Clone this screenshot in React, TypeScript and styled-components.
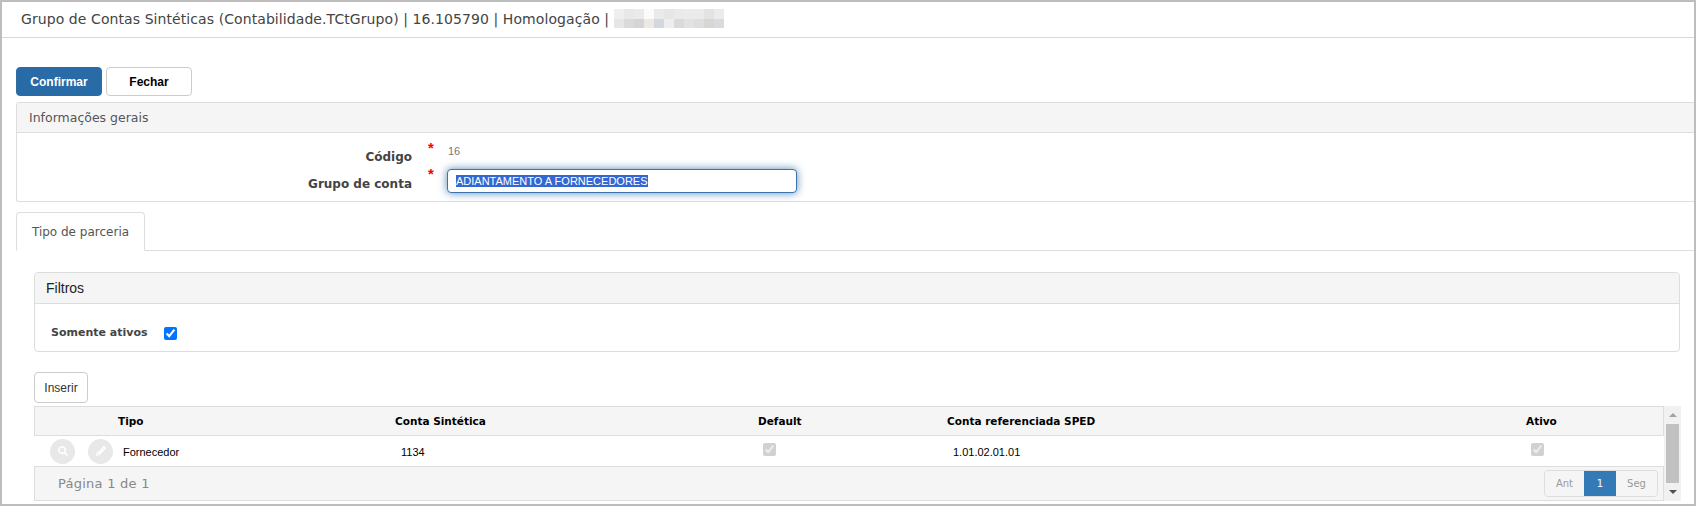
import { useEffect, useRef } from 'react'
import styled, { createGlobalStyle } from 'styled-components'
import { FaPencilAlt, FaSearch } from 'react-icons/fa'

const verdana = '"DejaVu Sans", Verdana, sans-serif'
const arial = '"Liberation Sans", Arial, sans-serif'

const blurRows = [
  ['#efefef', '#e8e8e8', '#ebebeb', '#fcfbf7', '#e8eaed', '#e6e6e6', '#e9eaea', '#ebebe9', '#ebebeb', '#e3e3e1', '#ebebeb'],
  ['#e6e6e6', '#d8dadc', '#d6d5d3', '#ece9e6', '#d3d8de', '#eeeeee', '#dadada', '#e2e2e2', '#dedede', '#d8d6d4', '#d9dadb'],
]

export default function App() {
  const inputRef = useRef<HTMLInputElement>(null)

  useEffect(() => {
    inputRef.current?.focus()
    inputRef.current?.select()
  }, [])

  return (
    <Frame>
      <GlobalStyle />
      <TitleBar>
        Grupo de Contas Sintéticas (Contabilidade.TCtGrupo) | 16.105790 | Homologação |
        <Blur>
          {blurRows.flat().map((color, i) => (
            <BlurCell key={i} $color={color} />
          ))}
        </Blur>
      </TitleBar>

      <Content>
        <Actions>
          <PrimaryButton>Confirmar</PrimaryButton>
          <DefaultButton>Fechar</DefaultButton>
        </Actions>

        <GeneralPanel>
          <GeneralHeading>Informações gerais</GeneralHeading>
          <FormGrid>
            <FieldLabel $drop={2}>Código</FieldLabel>
            <Star>*</Star>
            <StaticValue>16</StaticValue>
            <FieldLabel $drop={6}>Grupo de conta</FieldLabel>
            <Star>*</Star>
            <TextInput ref={inputRef} defaultValue="ADIANTAMENTO A FORNECEDORES" />
          </FormGrid>
        </GeneralPanel>

        <TabStrip>
          <Tab>Tipo de parceria</Tab>
        </TabStrip>

        <TabBody>
          <FilterPanel>
            <FilterHeading>Filtros</FilterHeading>
            <FilterBody>
              <FilterLabel>Somente ativos</FilterLabel>
              <Check type="checkbox" defaultChecked />
            </FilterBody>
          </FilterPanel>

          <InsertButton>Inserir</InsertButton>

          <GridWrap>
            <DataGrid>
              <HeaderRow>
                <HeaderCell />
                <HeaderCell />
                <HeaderCell>Tipo</HeaderCell>
                <HeaderCell>Conta Sintética</HeaderCell>
                <HeaderCell>Default</HeaderCell>
                <HeaderCell>Conta referenciada SPED</HeaderCell>
                <HeaderCell>Ativo</HeaderCell>
              </HeaderRow>
              <DataRow>
                <IconCell $inset={16}>
                  <RoundIcon><FaSearch /></RoundIcon>
                </IconCell>
                <IconCell $inset={15}>
                  <RoundIcon><FaPencilAlt /></RoundIcon>
                </IconCell>
                <TextCell $inset={12}>Fornecedor</TextCell>
                <TextCell $inset={13}>1134</TextCell>
                <CheckCell>
                  <Check type="checkbox" defaultChecked disabled />
                </CheckCell>
                <TextCell $inset={13}>1.01.02.01.01</TextCell>
                <CheckCell>
                  <Check type="checkbox" defaultChecked disabled />
                </CheckCell>
              </DataRow>
              <Footer>
                <PageInfo>Página 1 de 1</PageInfo>
                <Pager>
                  <PageItem $width={39}>Ant</PageItem>
                  <PageItem $width={32} $active>1</PageItem>
                  <PageItem $width={41}>Seg</PageItem>
                </Pager>
              </Footer>
            </DataGrid>
            <ScrollBar>
              <ArrowUp />
              <Thumb />
              <ArrowDown />
            </ScrollBar>
          </GridWrap>
        </TabBody>
      </Content>
    </Frame>
  )
}

const GlobalStyle = createGlobalStyle`
  * {
    box-sizing: border-box;
  }

  html, body {
    margin: 0;
    background: #fff;
  }

  ::selection {
    background: #3367d1;
    color: #fff;
  }
`

const Frame = styled.div`
  width: 1696px;
  height: 506px;
  overflow: hidden;
  border: 2px solid #bdbdbd;
  background: #fff;
`

const TitleBar = styled.div`
  display: flex;
  align-items: center;
  gap: 5px;
  height: 36px;
  padding: 0 0 2px 19px;
  border-bottom: 1px solid #d9d9d9;
  color: #444;
  font-family: ${verdana};
  font-size: 14px;
  letter-spacing: 0.08px;
  white-space: pre;
`

const Blur = styled.div`
  display: grid;
  grid-template-columns: repeat(11, 10px);
  grid-auto-rows: 9.5px;
`

const BlurCell = styled.div<{ $color: string }>`
  background: ${({ $color }) => $color};
`

const Content = styled.div`
  padding: 29px 0 0 14px;
`

const Actions = styled.div`
  display: flex;
  gap: 4px;
  margin-bottom: 6px;
`

const PrimaryButton = styled.button`
  width: 86px;
  height: 29px;
  padding: 0;
  border: 1px solid #2e6da4;
  border-radius: 4px;
  background: #286ba6;
  color: #fff;
  font-family: ${arial};
  font-size: 12px;
  font-weight: 700;
`

const DefaultButton = styled(PrimaryButton)`
  border-color: #ccc;
  background: #fff;
  color: #000;
`

const GeneralPanel = styled.section`
  border: 1px solid #ddd;
  border-right: 0;
  border-radius: 3px 0 0 3px;
`

const GeneralHeading = styled.div`
  display: flex;
  align-items: center;
  height: 30px;
  padding-left: 12px;
  border-bottom: 1px solid #ddd;
  background: #f5f5f5;
  color: #555;
  font-family: ${verdana};
  font-size: 12.5px;
`

const FormGrid = styled.div`
  display: grid;
  grid-template-columns: 395px 35px 1fr;
  grid-template-rows: 26px 24px;
  padding: 10px 0 8px;
  align-items: center;
`

const FieldLabel = styled.label<{ $drop: number }>`
  padding-top: ${({ $drop }) => $drop}px;
  color: #444;
  font-family: ${verdana};
  font-size: 12px;
  font-weight: 700;
  text-align: right;
`

const Star = styled.span`
  align-self: start;
  margin-top: -3px;
  padding-left: 16px;
  color: #f00;
  font-family: ${arial};
  font-size: 15px;
  font-weight: 700;
  line-height: 15px;
`

const StaticValue = styled.span`
  align-self: start;
  padding: 2px 0 0 1px;
  color: #777;
  font-family: ${arial};
  font-size: 11px;
`

const TextInput = styled.input`
  width: 350px;
  height: 24px;
  padding: 0 8px;
  border: 1px solid #3a76ad;
  border-radius: 4px;
  outline: 0;
  box-shadow: 0 0 8px rgba(46, 109, 164, 0.8);
  color: #444;
  font-family: ${arial};
  font-size: 11px;
`

const TabStrip = styled.div`
  display: flex;
  margin-top: 10px;
  border-bottom: 1px solid #ddd;
`

const Tab = styled.div`
  display: flex;
  align-items: center;
  justify-content: center;
  width: 129px;
  height: 39px;
  margin-bottom: -1px;
  border: 1px solid #ddd;
  border-bottom: 1px solid #fff;
  border-radius: 4px 4px 0 0;
  background: #fff;
  color: #555;
  font-family: ${verdana};
  font-size: 12px;
`

const TabBody = styled.div`
  padding: 21px 14px 0 18px;
`

const FilterPanel = styled.section`
  border: 1px solid #ddd;
  border-radius: 4px;
`

const FilterHeading = styled.div`
  display: flex;
  align-items: center;
  height: 31px;
  padding-left: 11px;
  border-bottom: 1px solid #ddd;
  border-radius: 4px 4px 0 0;
  background: #f5f5f5;
  color: #222;
  font-family: ${arial};
  font-size: 14px;
`

const FilterBody = styled.div`
  display: flex;
  height: 47px;
  padding: 19px 0 0 16px;
`

const FilterLabel = styled.span`
  width: 113px;
  margin-top: 3px;
  color: #444;
  font-family: ${verdana};
  font-size: 11px;
  font-weight: 700;
`

const Check = styled.input`
  width: 13px;
  height: 13px;
  margin: 4px 0 0;
`

const InsertButton = styled.button`
  display: block;
  width: 54px;
  height: 31px;
  margin: 20px 0 3px;
  padding: 0;
  border: 1px solid #ccc;
  border-radius: 4px;
  background: #fff;
  color: #333;
  font-family: ${arial};
  font-size: 12px;
`

const GridWrap = styled.div`
  display: grid;
  grid-template-columns: 1fr 17px;
  height: 95px;
`

const DataGrid = styled.div`
  display: grid;
  grid-template-rows: 30px 30px 35px;
`

const columns = '39px 38px 277px 363px 189px 579px 143px'

const HeaderRow = styled.div`
  display: grid;
  grid-template-columns: ${columns};
  border: 1px solid #ddd;
  border-bottom: 0;
  background: #f5f5f5;
`

const HeaderCell = styled.div`
  display: flex;
  align-items: center;
  padding-left: 6px;
  border-bottom: 1px solid #ddd;
  border-right: 1px solid #f5f5f5;
  color: #000;
  font-family: ${verdana};
  font-size: 10.5px;
  font-weight: 700;
`

const DataRow = styled.div`
  display: grid;
  grid-template-columns: ${columns};
  align-items: center;
`

const IconCell = styled.div<{ $inset: number }>`
  display: flex;
  padding-left: ${({ $inset }) => $inset}px;
`

const RoundIcon = styled.span`
  display: flex;
  flex-shrink: 0;
  align-items: center;
  justify-content: center;
  width: 25px;
  height: 25px;
  border-radius: 50%;
  background: #e8e8e8;
  color: #fff;
  font-size: 10px;
`

const TextCell = styled.div<{ $inset: number }>`
  padding: 2px 0 0 ${({ $inset }) => $inset}px;
  color: #000;
  font-family: ${arial};
  font-size: 11px;
`

const CheckCell = styled.div`
  display: flex;
  padding: 0 0 8px 12px;
`

const Footer = styled.div`
  display: flex;
  align-items: center;
  justify-content: space-between;
  padding: 0 5px 0 23px;
  border: 1px solid #ddd;
  background: #f5f5f5;
`

const PageInfo = styled.span`
  color: #888;
  font-family: ${verdana};
  font-size: 13px;
  letter-spacing: 0.25px;
`

const Pager = styled.div`
  display: flex;
  height: 27px;
  border: 1px solid #ddd;
  border-radius: 4px;
  overflow: hidden;
`

const PageItem = styled.span<{ $width: number; $active?: boolean }>`
  display: flex;
  align-items: center;
  justify-content: center;
  width: ${({ $width }) => $width}px;
  background: ${({ $active }) => ($active ? '#337ab7' : '#f5f5f5')};
  color: ${({ $active }) => ($active ? '#fff' : '#999')};
  font-family: ${verdana};
  font-size: 10px;
`

const ScrollBar = styled.div`
  display: flex;
  flex-direction: column;
  align-items: center;
  padding: 7px 0 5px;
  background: #f1f1f1;
`

const ArrowUp = styled.span`
  width: 0;
  height: 0;
  margin-bottom: 7px;
  border-left: 4px solid transparent;
  border-right: 4px solid transparent;
  border-bottom: 4px solid #a3a3a3;
`

const ArrowDown = styled.span`
  width: 0;
  height: 0;
  margin-top: 7px;
  border-left: 4px solid transparent;
  border-right: 4px solid transparent;
  border-top: 4px solid #505050;
`

const Thumb = styled.span`
  width: 13px;
  height: 59px;
  background: #c1c1c1;
`
